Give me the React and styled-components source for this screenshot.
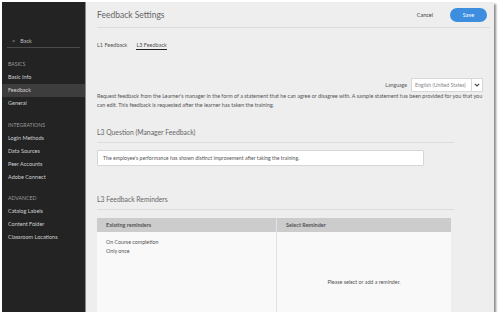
import React from 'react';
import styled, { createGlobalStyle } from 'styled-components';

const GlobalStyle = createGlobalStyle`
  html, body {
    margin: 0;
    padding: 0;
    background: #ffffff;
    font-family: Lato, "Open Sans", sans-serif;
  }
`;

const Frame = styled.div`
  display: flex;
  width: 492px;
  height: 310px;
  margin: 2px 0 0 2px;
  box-shadow: 2px 2px 2px rgba(0, 0, 0, 0.45);
  overflow: hidden;
`;

const Sidebar = styled.nav`
  width: 83px;
  flex-shrink: 0;
  background: #232323;
  border-right: 1px solid #8a8a8a;
  display: flex;
  flex-direction: column;
  padding-top: 33px;
`;

const BackRow = styled.div`
  display: flex;
  align-items: center;
  gap: 5px;
  height: 12px;
  margin: 0 5px;
  padding-left: 5px;
  border-bottom: 1px solid #4a4a4a;
  font-size: 5.5px;
  color: #bdbdbd;
`;

const Section = styled.div`
  display: flex;
  flex-direction: column;
  margin-top: ${(p) => p.$top}px;
`;

const SectionTitle = styled.div`
  font-size: 5.2px;
  color: #9a9a9a;
  text-transform: uppercase;
  padding-left: 6px;
  height: 8px;
  line-height: 8px;
  margin-bottom: 3px;
`;

const NavItem = styled.div`
  font-size: 5.5px;
  color: #cfcfcf;
  padding-left: 6px;
  height: 13px;
  line-height: 13px;
  background: ${(p) => (p.$active ? '#3d3d3d' : 'transparent')};
`;

const Main = styled.main`
  flex: 1;
  background: #eeeeee;
  padding: 0 4px 0 11px;
  display: flex;
  flex-direction: column;
`;

const Header = styled.div`
  display: flex;
  align-items: center;
  height: 25px;
  border-bottom: 1px solid #dcdcdc;
`;

const Title = styled.div`
  flex: 1;
  font-size: 8.5px;
  color: #666666;
  padding-top: 1px;
`;

const CancelButton = styled.div`
  font-size: 5.5px;
  color: #444444;
  margin-right: 17px;
`;

const SaveButton = styled.div`
  width: 37px;
  height: 14px;
  border-radius: 7px;
  background: #3e8ee0;
  color: #ffffff;
  font-size: 5.5px;
  display: flex;
  align-items: center;
  justify-content: center;
  margin-right: 3px;
`;

const Tabs = styled.div`
  display: flex;
  gap: 9px;
  margin-top: 13px;
  height: 10px;
`;

const Tab = styled.div`
  font-size: 5.5px;
  color: #555555;
  height: 8px;
  line-height: 8px;
  border-bottom: ${(p) => (p.$active ? '1px solid #222222' : '1px solid transparent')};
`;

const LanguageRow = styled.div`
  display: flex;
  align-items: center;
  justify-content: flex-end;
  gap: 4px;
  margin-top: 27px;
  margin-right: 7px;
`;

const Label = styled.span`
  font-size: 5.2px;
  color: #555555;
`;

const Select = styled.div`
  display: flex;
  height: 12px;
  border: 1px solid #d8d8d8;
  background: #ffffff;
`;

const SelectValue = styled.div`
  width: 60px;
  font-size: 5.2px;
  color: #888888;
  display: flex;
  align-items: center;
  padding-left: 3px;
  box-sizing: border-box;
  border-right: 1px solid #d8d8d8;
`;

const SelectArrow = styled.div`
  width: 10px;
  display: flex;
  align-items: center;
  justify-content: center;
`;

const Paragraph = styled.p`
  margin: 0;
  font-size: 5.4px;
  line-height: 9px;
  color: #555555;
  padding-right: 2px;
`;

const SectionHeading = styled.div`
  font-size: 6.8px;
  color: #666666;
  height: 18px;
  line-height: 16px;
  margin-top: ${(p) => p.$top}px;
  margin-right: 36px;
  border-bottom: 1px solid #dddddd;
`;

const QuestionInput = styled.div`
  margin-top: 7px;
  width: 327px;
  height: 16px;
  box-sizing: border-box;
  border: 1px solid #d6d6d6;
  border-radius: 1px;
  background: #ffffff;
  font-size: 5.2px;
  color: #555555;
  display: flex;
  align-items: center;
  padding-left: 5px;
`;

const Table = styled.div`
  margin-top: 8px;
  width: 354px;
  flex: 1;
  display: grid;
  grid-template-columns: 179px 1fr;
  grid-template-rows: 14px 1fr;
  column-gap: 1px;
  background: #e2e2e2;
`;

const HeadCell = styled.div`
  background: #cccccc;
  font-size: 5.5px;
  font-weight: bold;
  color: #555555;
  display: flex;
  align-items: center;
  padding-left: 9px;
`;

const BodyCell = styled.div`
  background: #f9f9f9;
  font-size: 5.3px;
  color: #555555;
  padding: ${(p) => (p.$center ? '46px 0 0 0' : '6px 0 0 9px')};
  display: flex;
  flex-direction: column;
  align-items: ${(p) => (p.$center ? 'center' : 'flex-start')};
  line-height: 9px;
`;

const navSections = [
  { title: 'Basics', top: 12, items: ['Basic Info', 'Feedback', 'General'] },
  { title: 'Integrations', top: 11, items: ['Login Methods', 'Data Sources', 'Peer Accounts', 'Adobe Connect'] },
  { title: 'Advanced', top: 10, items: ['Catalog Labels', 'Content Folder', 'Classroom Locations'] },
];

const App = () => {
  return (
    <>
      <GlobalStyle />
      <Frame>
        <Sidebar>
          <BackRow>
            <span>&lt;</span>
            <span>Back</span>
          </BackRow>
          {navSections.map((s) => (
            <Section key={s.title} $top={s.top}>
              <SectionTitle>{s.title}</SectionTitle>
              {s.items.map((it) => (
                <NavItem key={it} $active={it === 'Feedback'}>
                  {it}
                </NavItem>
              ))}
            </Section>
          ))}
        </Sidebar>
        <Main>
          <Header>
            <Title>Feedback Settings</Title>
            <CancelButton>Cancel</CancelButton>
            <SaveButton>Save</SaveButton>
          </Header>
          <Tabs>
            <Tab>L1 Feedback</Tab>
            <Tab $active>L3 Feedback</Tab>
          </Tabs>
          <LanguageRow>
            <Label>Language</Label>
            <Select>
              <SelectValue>English (United States)</SelectValue>
              <SelectArrow>
                <svg width="6" height="4" viewBox="0 0 6 4">
                  <path d="M0.8 0.8 L3 3 L5.2 0.8" fill="none" stroke="#444" strokeWidth="1.1" />
                </svg>
              </SelectArrow>
            </Select>
          </LanguageRow>
          <Paragraph>
            Request feedback from the Learner's manager in the form of a statement that he can agree or disagree with. A sample statement has been provided for you that you can edit. This feedback is requested after the learner has taken the training.
          </Paragraph>
          <SectionHeading $top={14}>L3 Question (Manager Feedback)</SectionHeading>
          <QuestionInput>The employee's performance has shown distinct improvement after taking the training.</QuestionInput>
          <SectionHeading $top={25}>L3 Feedback Reminders</SectionHeading>
          <Table>
            <HeadCell>Existing reminders</HeadCell>
            <HeadCell>Select Reminder</HeadCell>
            <BodyCell>
              <span>On Course completion</span>
              <span>Only once</span>
            </BodyCell>
            <BodyCell $center>Please select or add a reminder.</BodyCell>
          </Table>
        </Main>
      </Frame>
    </>
  );
};

export default App;
